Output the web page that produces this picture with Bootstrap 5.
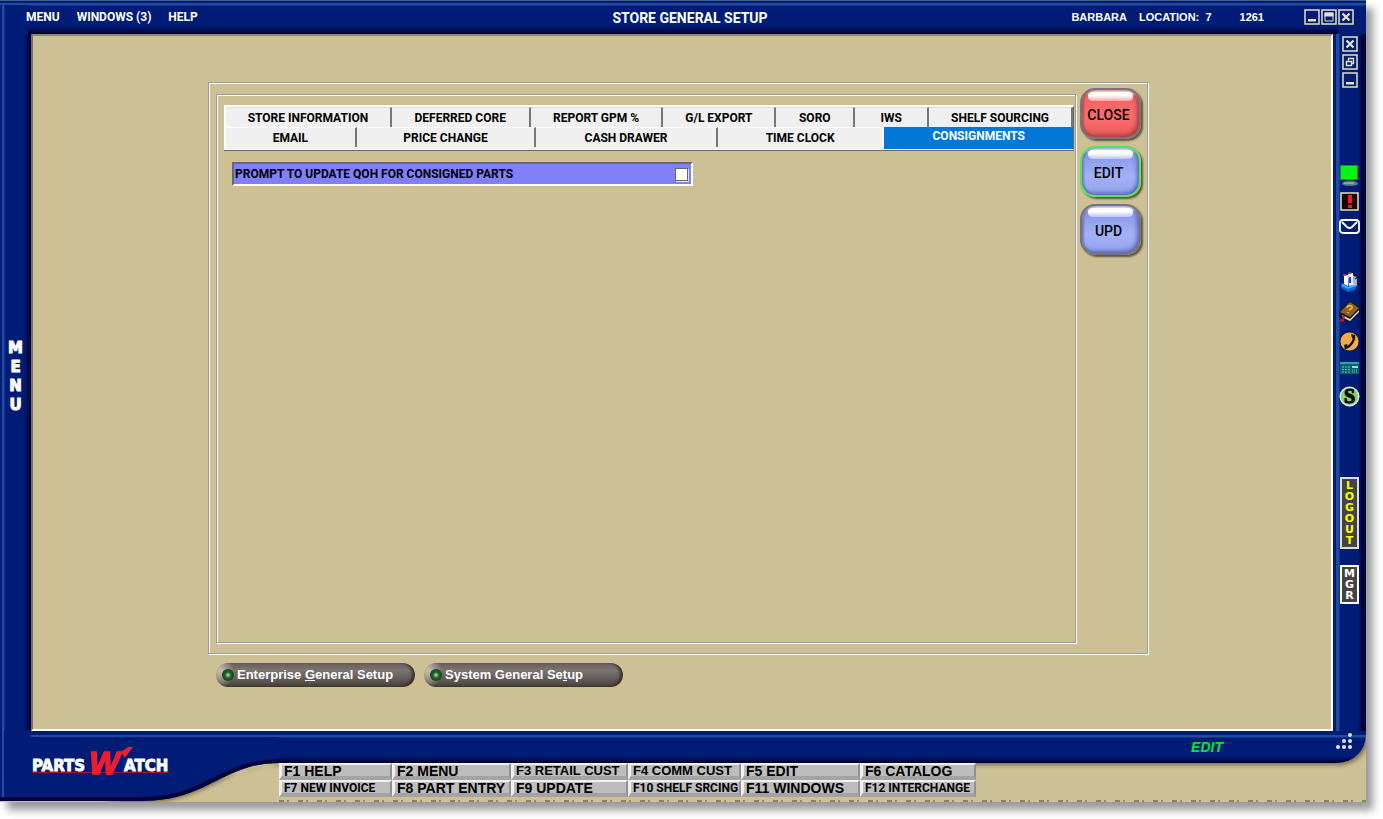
<!DOCTYPE html>
<html lang="en">
<head>
<meta charset="utf-8">
<meta name="viewport" content="width=device-width, initial-scale=1">
<title>Store General Setup</title>
<link href="https://cdn.jsdelivr.net/npm/bootstrap@5.3.0/dist/css/bootstrap.min.css" rel="stylesheet">
<style>
:root{--tan:#cec095}
body{font-family:"Liberation Sans",Arial,sans-serif;font-size:11px;font-weight:700;line-height:14px;color:#000;background:#fff;padding:0 17px 17px 0;min-height:100vh;display:flex}
button{font:inherit;color:inherit;padding:0;border:0;background:none}
.shell{background:var(--tan);box-shadow:7px 8px 8px #999}
.titlebar{height:34px;background:linear-gradient(90deg,#001c77 0 2px,#1f4c9c 2px 4px,#001c77 5px) 0 100%/28px 29px no-repeat,linear-gradient(#001c77,#001c77) 100% 100%/28px 28px no-repeat,linear-gradient(#435d8c 0 1px,#001c77 1px 3px,#1f4c9c 3px 5px,#001c77 6px 26px,#00023a 33px);color:#fff;padding:0 12px}
.menus{gap:17px;padding-left:14px}
.menus a{color:#fff;text-decoration:none}
.menus,.tabstrip,.prompt{font-family:Roboto,"Liberation Sans",sans-serif;font-size:12px}
.heading{font:700 14px/16px Roboto,"Liberation Sans",sans-serif;margin:2px 0 0}
.titlebar>div{flex:1 1 0}
.wbtns,.wstack{gap:1px}
.wstack{gap:2px;padding-top:2px}
.leftbar{width:31px;padding-bottom:12px;background:linear-gradient(90deg,#001c77 0 2px,#1f4c9c 2px 4px,#001c77 5px 24px,#00023a 30px)}
.leftbar button{color:#fff;font:700 15px/19px "DejaVu Sans",sans-serif;-webkit-text-stroke:1px #fff;width:15px;word-break:break-all;text-align:center}
.rightbar{width:33px;background:linear-gradient(90deg,#001c77 0 3px,#1f4c9c 3px 6px,#001c77 7px 25px,#00023a 29px)}
.workspace{background:var(--tan);border:2px solid;border-color:#8e8480 #fff #fff #77706e;padding:46px 183px 42px 175px}
.groove{border:1px solid #9b9b9b;box-shadow:inset 1px 1px #fff,1px 1px #fff}
.outer{padding:4px 6px 10px 7px}
.inner{padding:10px 1px 10px 7px;margin-top:7px}
.tabstrip{background:#f0f0f0;border:1px solid #fff;border-width:2px 1px 1px 2px;border-right-color:#696969;box-shadow:0 1px #696969;height:45px}
.tabrow{display:grid}
.row-a{grid-template-columns:166fr 139fr 133fr 113fr 79fr 74fr 144fr;height:20px}
.row-b{grid-template-columns:131fr 180fr 182fr 167fr 189fr;height:22px}
.tabrow button{border-right:2px solid #777;border-top:1px solid #ddd;text-align:center}
.row-b button{margin-bottom:2px;border-top-color:#fff}
.row-b button:nth-child(4){border-color:#fff}
.row-b button.current{background:#0078d7;color:#fff;border:0;margin-bottom:0;padding-bottom:4px}
.prompt{width:461px;max-width:100%;height:24px;background:#8080ff;border:2px solid;border-color:#696969 #fff #fff #696969;margin:12px 0 0 8px;padding:0 3px 0 1px}
.prompt input{appearance:none;width:13px;height:13px;background:#fff;border:1px solid #696969;box-shadow:1px 1px #e3e3e3;margin:0}
.prompt input:checked{background:#333}
.actions{width:61px;gap:7px;padding-top:1px}
.actions button{position:relative;height:51px;border-radius:15px;font:500 14px/16px Roboto,"Liberation Sans",sans-serif;padding:3px 4px 0 0;border:2px solid #77737c;box-shadow:2px 2px 2px #5e563c,inset -2px -2px 4px #5465b0,inset 2px 0 2px #7582b8;background:linear-gradient(#d3daf8 0 3px,#8798e6 6px,#a4b1f8 60%,#93a2ec)}
.actions button::before{content:"";position:absolute;top:2px;left:6px;right:6px;height:9px;border-radius:5px;background:linear-gradient(#fff 40%,#ffffff66)}
.actions button.stop{box-shadow:2px 2px 2px #5e563c,inset -2px -2px 4px #a83b3b,inset 2px 0 2px #b85656;background:linear-gradient(#f9d0d0 0 3px,#f26262 6px,#fb6c6c 60%,#e95a5a)}
.actions button.active{border-color:#55e35c}
.pills{gap:9px;margin-top:9px}
.pill{width:199px;height:24px;border-radius:12px;color:#fff;font-size:13px;background:radial-gradient(ellipse 14px 18px at 4px 8px,#c6bdb3,transparent),linear-gradient(#66605c,#7b746f 30%,#4a4441);padding-left:6px;gap:3px;box-shadow:inset -3px -1px 3px #38332f}
.lamp{width:12px;height:12px;border-radius:6px;background:radial-gradient(circle,#80d080 0 10%,#24602a 35%,#102c12)}
.foot{height:71px}
.logo{width:279px;height:71px;flex:none}
.bluebar{height:32px;background:linear-gradient(#001c77 0 4px,#1f4c9c 4px 6px,#001c77 7px 25px,#00023a 31px);border-bottom-right-radius:28px;box-shadow:2px 2px 4px #7b704c;clip-path:inset(0 0 -8px 0)}
.dots{width:17px;height:17px;margin:0 14px 12px 112px}
.status{font:italic 700 14px/16px "Liberation Sans",sans-serif;color:#0be42c}
.keys{display:grid;grid-template-columns:113px 119px 117px 113px 119px 116px;grid-auto-rows:17px;width:697px;position:relative}
.keys button{background:#bdbdbd;border:2px solid;border-color:#efefef #919191 #a3a3a3 #efefef;border-width:2px 2px 4px 3px;text-align:left;padding-left:2px;white-space:nowrap;line-height:10px;font-size:14px}
.keys .mid{font-size:13px}.keys .sm{font-family:Roboto,sans-serif;font-size:12px}
.wbtn{width:16px;height:16px;display:block}
.wbtn svg,.tool svg{display:block;width:100%;height:100%}
.tool{width:21px;height:21px;display:block}
.toolset{gap:5px;padding-top:77px}
.toolset+.toolset{gap:9px;padding-top:33px}
.toolset+.toolset+.toolset{gap:8px;padding-top:5px}
.updown{font:700 11px/11px "DejaVu Sans",sans-serif;width:19px;border:2px solid #ddd;background:#444;text-align:center;padding:1px 2px;word-break:break-all}
.logout{color:#ff0;height:72px;margin-top:70px}
.mgr{color:#fff;border-color:#fff;height:39px}
.ghost{height:2px;background:repeating-linear-gradient(90deg,#444 0 5px,transparent 5px 8px,#555 8px 10px,transparent 10px 19px);opacity:.5}
</style>
</head>
<body>
<div class="shell d-flex flex-column flex-grow-1">
  <header class="titlebar d-flex align-items-center">
    <div class="menus d-flex"><a href="#">MENU</a><a href="#">WINDOWS (3)</a><a href="#">HELP</a></div>
    <h1 class="heading">STORE GENERAL SETUP</h1>
    <div class="d-flex justify-content-end align-items-center text-nowrap">
      <span>BARBARA</span><span class="ms-2 ps-1">LOCATION:&nbsp; 7</span><span class="ms-4 ps-1 me-3">1261</span>
      <span class="wbtns d-flex ms-4">
        <button class="wbtn" aria-label="Minimize"><svg viewBox="0 0 16 16"><path d="M1 1h14v14H1z" fill="#001c77" stroke="#e4e1bd" stroke-width="1.500"/><path d="M4 10h8v2.500H4z" fill="#e4e1bd"/></svg></button>
        <button class="wbtn" aria-label="Maximize"><svg viewBox="0 0 16 16"><path d="M1 1h14v14H1z" fill="#001c77" stroke="#e4e1bd" stroke-width="1.500"/><path d="M4 4h8v8H4z" fill="none" stroke="#e4e1bd"/><path d="M3.500 3.500h9v4h-9z" fill="#e4e1bd"/></svg></button>
        <button class="wbtn" aria-label="Exit"><svg viewBox="0 0 16 16"><path d="M1 1h14v14H1z" fill="#001c77" stroke="#e4e1bd" stroke-width="1.500"/><path d="M4.500 4.500l7 7m0-7l-7 7" stroke="#e4e1bd" stroke-width="2.400"/></svg></button>
      </span>
    </div>
  </header>

  <div class="d-flex flex-grow-1">
    <aside class="leftbar d-flex align-items-center justify-content-center flex-shrink-0"><button>MENU</button></aside>

    <main class="workspace flex-grow-1 d-flex flex-column">
      <section class="groove outer flex-grow-1 d-flex gap-1">
        <div class="groove inner flex-grow-1">
          <div class="tabstrip" role="tablist">
            <div class="tabrow row-a">
              <button role="tab">STORE INFORMATION</button><button role="tab">DEFERRED CORE</button><button role="tab">REPORT GPM %</button><button role="tab">G/L EXPORT</button><button role="tab">SORO</button><button role="tab">IWS</button><button role="tab">SHELF SOURCING</button>
            </div>
            <div class="tabrow row-b">
              <button role="tab">EMAIL</button><button role="tab">PRICE CHANGE</button><button role="tab">CASH DRAWER</button><button role="tab">TIME CLOCK</button><button role="tab" class="current" aria-selected="true">CONSIGNMENTS</button>
            </div>
          </div>
          <div class="prompt d-flex justify-content-between align-items-center">
            <label for="qoh">PROMPT TO UPDATE QOH FOR CONSIGNED PARTS</label>
            <input type="checkbox" id="qoh">
          </div>
        </div>
        <div class="actions d-flex flex-column flex-shrink-0">
          <button class="stop">CLOSE</button>
          <button class="active">EDIT</button>
          <button>UPD</button>
        </div>
      </section>
      <div class="pills d-flex ps-2">
        <button class="pill d-flex align-items-center"><span class="lamp"></span><span>Enterprise <u>G</u>eneral Setup</span></button>
        <button class="pill d-flex align-items-center"><span class="lamp"></span><span>System General Se<u>t</u>up</span></button>
      </div>
    </main>

    <aside class="rightbar d-flex flex-column align-items-center flex-shrink-0">
      <div class="wstack d-flex flex-column">
        <button class="wbtn" aria-label="Close window"><svg viewBox="0 0 16 16"><path d="M1 1h14v14H1z" fill="#001c77" stroke="#e4e1bd" stroke-width="1.500"/><path d="M4.500 4.500l7 7m0-7l-7 7" stroke="#e4e1bd" stroke-width="2.400"/></svg></button>
        <button class="wbtn" aria-label="Restore window"><svg viewBox="0 0 16 16"><path d="M1 1h14v14H1z" fill="#001c77" stroke="#e4e1bd" stroke-width="1.500"/><path d="M6.500 6.500v-2h5v5h-2M4.500 7.500h5v4h-5z" fill="none" stroke="#e4e1bd" stroke-width="1.400"/></svg></button>
        <button class="wbtn" aria-label="Minimize window"><svg viewBox="0 0 16 16"><path d="M1 1h14v14H1z" fill="#001c77" stroke="#e4e1bd" stroke-width="1.500"/><path d="M4 10h8v2.500H4z" fill="#e4e1bd"/></svg></button>
      </div>
      <div class="toolset d-flex flex-column">
        <button class="tool" aria-label="Terminal"><svg viewBox="0 0 21 21"><rect x="1" y="0" width="18" height="15" rx="1" fill="#0c9a28"/><rect x="2" y="1" width="16" height="13" fill="#00f510"/><path d="M7 15h8v3H7z" fill="#345"/><ellipse cx="11" cy="18.500" rx="8" ry="2.300" fill="#5d7c93"/><path d="M5 18h10" stroke="#b5c5ce"/></svg></button>
        <button class="tool" aria-label="Alert"><svg viewBox="0 0 21 21"><path d="M2 2h17v17H2z" fill="#1b0503" stroke="#e4e1bd" stroke-width="1.500"/><path d="M9 4h4v8H9zM9 14h4v3H9z" fill="#f01a22"/></svg></button>
        <button class="tool" aria-label="Mail"><svg viewBox="0 0 21 21"><rect x="1" y="3" width="19" height="13" rx="3" fill="none" stroke="#fff" stroke-width="1.800"/><path d="M3 5l5 5q2.500 2 5 0l5-5" fill="none" stroke="#fff" stroke-width="1.800"/></svg></button>
      </div>
      <div class="toolset d-flex flex-column">
        <button class="tool" aria-label="Customers"><svg viewBox="0 0 21 21"><path d="M2 13l7-3 9 4-2 5-7 2-7-4z" fill="#0e68d4"/><path d="M3 14l6 3 9-3" stroke="#42b7f2" stroke-width="1.500" fill="none"/><path d="M5 5l4-1v11l-4-2z" fill="#fff"/><path d="M9 3l5-1 1 12-5 1z" fill="#e6eaf5"/><path d="M14 5l4 1v8h-3z" fill="#aeb6c9"/><path d="M11 6v6" stroke="#1d3fbb" stroke-width="2"/><path d="M4 4h3M10 2h2" stroke="#e12a2a" stroke-width="2"/><path d="M15 4h2M16 8l3-2" stroke="#151b2a" stroke-width="1.500"/></svg></button>
        <button class="tool" aria-label="Help book"><svg viewBox="0 0 21 21"><path d="M0 11L11 0l10 6v5L10 21 1 16z" fill="#17130e"/><path d="M1 11L11 1l9 6-9 9z" fill="#84602a"/><path d="M3 14l8 4 9-9v2l-9 9-8-4z" fill="#e8e0c5"/><path d="M8 7c1-4 6-2 5 0 0 1-2 1-3 2m-1 2v1" stroke="#f2b431" stroke-width="1.800" fill="none"/><path d="M3 15l2 1-1 4-2-1-1 2" stroke="#d01822" stroke-width="1.500" fill="none"/></svg></button>
        <button class="tool" aria-label="Phone"><svg viewBox="0 0 21 21"><circle cx="10.500" cy="10.500" r="9.500" fill="#f5a94c" stroke="#111" stroke-width=".8"/><path d="M15 4c1 5-3 11-8 13" fill="none" stroke="#111" stroke-width="2.400"/><path d="M12 3l4 1 0 4-3-1zM5 14l3-1 1 3-3 3z" fill="#111"/></svg></button>
      </div>
      <div class="toolset d-flex flex-column">
        <button class="tool" aria-label="Calculator"><svg viewBox="0 0 21 21"><path d="M1 5h19v12H1z" fill="#0d5d6a"/><path d="M1 5h19v2H1z" fill="#2ba4a5"/><path d="M3 10h9M3 12.500h9M3 15h9" stroke="#49cbc6" stroke-dasharray="2 1"/><path d="M13 9h6v2h-6z" fill="#8be0d0"/><path d="M13 13h6M13 15h6" stroke="#49cbc6" stroke-dasharray="1 1"/></svg></button>
        <button class="tool" aria-label="Sales"><svg viewBox="0 0 21 21"><circle cx="10.500" cy="10.500" r="10" fill="#d7efd2"/><circle cx="10.500" cy="10.500" r="8.500" fill="#83cf72"/><text x="10.500" y="17" text-anchor="middle" font-family="Liberation Serif,serif" font-weight="700" font-size="20" stroke="#000" stroke-width="1">S</text></svg></button>
      </div>
      <button class="updown logout">LOGOUT</button>
      <button class="updown mgr mt-3">MGR</button>
    </aside>
  </div>

  <footer class="foot d-flex">
    <svg class="logo" viewBox="0 -2 279 71" role="img" aria-label="PartsWatch">
      <defs><filter id="soft" x="-10%" y="-10%" width="120%" height="130%"><feGaussianBlur stdDeviation="2"/></filter></defs>
      <path d="M290 28V32C255 32 240 38 222 47S180 70 140 70H100z" fill="#7b704c" filter="url(#soft)"/>
      <path d="M0-2H280V30C255 30 240 36 220 46S180 68 140 68H0z" fill="#001c77"/>
      <path d="M280 28C255 28 240 34 219 44S180 66 140 66H0" fill="none" stroke="#00023a" stroke-width="4"/>
      <path d="M3-2V64M31 3H280" stroke="#1f4c9c" stroke-width="2"/>
      <path d="M32 39.500H169" stroke="#9b163b"/>
      <g font-family="DejaVu Sans,sans-serif" font-weight="700" font-size="15" fill="#fff" stroke="#fff" stroke-width=".8"><text x="32" y="38">PARTS</text><text x="124" y="38">ATCH</text></g>
      <text x="89" y="41" font-family="Liberation Sans,sans-serif" font-style="italic" font-weight="700" font-size="32" fill="#ed1c2e" stroke="#ed1c2e" stroke-width="1.500">W</text>
      <path d="M121 19L128 14H133L125 25z" fill="#ed1c2e"/>
    </svg>
    <div class="flex-grow-1 d-flex flex-column">
      <div class="bluebar d-flex align-items-center justify-content-end">
        <span class="status">EDIT</span>
        <svg class="dots" viewBox="0 0 17 17" fill="#e2e5f2"><circle cx="15" cy="2" r="2"/><circle cx="9" cy="8" r="2"/><circle cx="15" cy="8" r="2"/><circle cx="3" cy="14" r="2"/><circle cx="9" cy="14" r="2"/><circle cx="15" cy="14" r="2"/></svg>
      </div>
      <nav class="keys">
        <button>F1 HELP</button><button>F2 MENU</button><button class="mid">F3 RETAIL CUST</button><button class="mid">F4 COMM CUST</button><button>F5 EDIT</button><button>F6 CATALOG</button>
        <button class="sm">F7 NEW INVOICE</button><button>F8 PART ENTRY</button><button>F9 UPDATE</button><button class="sm">F10 SHELF SRCING</button><button>F11 WINDOWS</button><button class="sm">F12 INTERCHANGE</button>
      </nav>
      <div class="ghost mt-auto"></div>
    </div>
  </footer>
</div>
<script src="https://cdn.jsdelivr.net/npm/bootstrap@5.3.0/dist/js/bootstrap.bundle.min.js"></script>
</body>
</html>
